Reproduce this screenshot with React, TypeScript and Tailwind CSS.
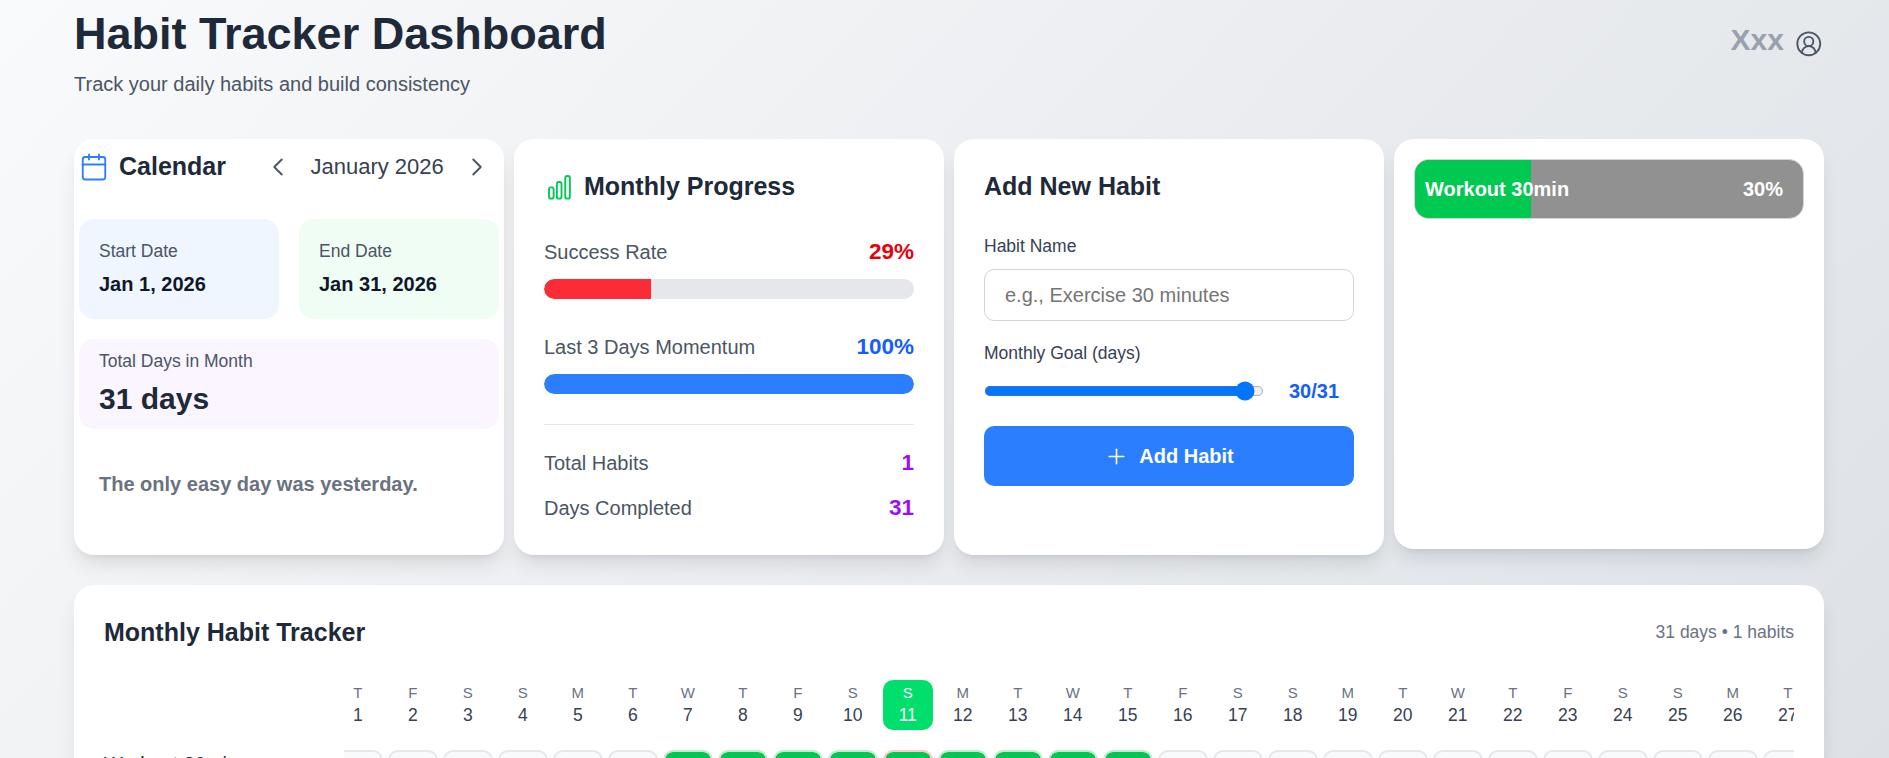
import { Calendar, ChevronLeft, ChevronRight, CircleUserRound, Plus } from 'lucide-react'

const days = Array.from({ length: 31 }, (_, i) => {
  const date = new Date(2026, 0, i + 1)
  return { day: i + 1, letter: 'SMTWTFS'[date.getDay()] }
})

const isDone = (day: number) => day >= 7 && day <= 15

function ProgressRow({ label, value, valueClass }: { label: string; value: string; valueClass: string }) {
  return (
    <div className="flex items-center justify-between">
      <span className="text-gray-600">{label}</span>
      <span className={`text-lg font-bold ${valueClass}`}>{value}</span>
    </div>
  )
}

function BarsIcon() {
  return (
    <svg viewBox="0 0 24 24" fill="none" stroke="currentColor" strokeWidth="1.5" className="h-6 w-6 text-green-500">
      <rect x="4" y="12.3" width="3.7" height="9" rx="1.6" />
      <rect x="10.3" y="8" width="3.7" height="13.3" rx="1.6" />
      <rect x="17" y="3.2" width="3.7" height="18.1" rx="1.6" />
    </svg>
  )
}

export default function App() {
  return (
    <div className="h-screen overflow-hidden font-['Liberation_Sans',Arial,sans-serif]">
      <div className="h-[2000px] bg-gradient-to-br from-gray-50 to-gray-300">
        <div className="w-[1400px] ml-[59.2px] pt-[7.3px] [zoom:1.25]">
          {/* Header */}
          <div className="flex items-start justify-between mb-8">
            <div>
              <h1 className="text-4xl font-bold text-gray-800">Habit Tracker Dashboard</h1>
              <p className="mt-2 text-gray-600">Track your daily habits and build consistency</p>
            </div>
            <div className="flex items-center gap-[9px] pt-[9px] pr-[1px]">
              <span className="text-2xl font-bold text-gray-400">Xxx</span>
              <CircleUserRound className="mt-[5px] h-[22px] w-[22px] text-gray-600" strokeWidth={1.6} />
            </div>
          </div>

          <div className="grid grid-cols-4 gap-2 mb-6">
            {/* Calendar */}
            <div className="bg-white rounded-2xl shadow-lg px-1 pt-2">
              <div className="flex items-center justify-between pr-1.5 mb-7">
                <div className="flex items-center gap-2">
                  <Calendar className="h-6 w-6 text-blue-500" strokeWidth={1.5} />
                  <h2 className="text-xl font-bold text-gray-800">Calendar</h2>
                </div>
                <div className="flex items-center">
                  <ChevronLeft className="h-6 w-6 text-gray-600" strokeWidth={1.5} />
                  <span className="w-[135px] text-center text-[17.6px] leading-7 text-gray-700">January 2026</span>
                  <ChevronRight className="h-6 w-6 text-gray-600" strokeWidth={1.5} />
                </div>
              </div>
              <div className="grid grid-cols-2 gap-4">
                <div className="rounded-xl bg-blue-50 p-4">
                  <p className="text-sm text-gray-600">Start Date</p>
                  <p className="mt-1 font-bold text-gray-900">Jan 1, 2026</p>
                </div>
                <div className="rounded-xl bg-green-50 p-4">
                  <p className="text-sm text-gray-600">End Date</p>
                  <p className="mt-1 font-bold text-gray-900">Jan 31, 2026</p>
                </div>
              </div>
              <div className="mt-4 rounded-xl bg-purple-50 px-4 py-2">
                <p className="text-sm text-gray-600">Total Days in Month</p>
                <p className="mt-1 text-2xl font-bold text-gray-800">31 days</p>
              </div>
              <p className="mt-8 px-4 font-bold text-gray-500">The only easy day was yesterday.</p>
            </div>

            {/* Monthly progress */}
            <div className="bg-white rounded-2xl shadow-lg p-6">
              <div className="flex items-center gap-2 mb-6">
                <BarsIcon />
                <h2 className="text-xl font-bold text-gray-800">Monthly Progress</h2>
              </div>
              <ProgressRow label="Success Rate" value="29%" valueClass="text-red-600" />
              <div className="mt-2 h-4 rounded-full bg-gray-200 overflow-hidden">
                <div className="h-full bg-red-500 rounded-l-full" style={{ width: '29%' }} />
              </div>
              <div className="mt-6">
                <ProgressRow label="Last 3 Days Momentum" value="100%" valueClass="text-blue-600" />
              </div>
              <div className="mt-2 h-4 rounded-full bg-gray-200 overflow-hidden">
                <div className="h-full bg-blue-500 rounded-full" style={{ width: '100%' }} />
              </div>
              <div className="mt-6 border-t border-gray-200 pt-4 space-y-2">
                <ProgressRow label="Total Habits" value="1" valueClass="text-purple-600" />
                <ProgressRow label="Days Completed" value="31" valueClass="text-purple-600" />
              </div>
            </div>

            {/* Add habit */}
            <div className="bg-white rounded-2xl shadow-lg p-6">
              <h2 className="mb-6 text-xl font-bold text-gray-800">Add New Habit</h2>
              <label className="block mb-2 text-sm text-gray-700">Habit Name</label>
              <input
                placeholder="e.g., Exercise 30 minutes"
                className="w-full rounded-lg border border-gray-300 px-4 py-2 text-gray-800 outline-none placeholder:text-[#757575]"
              />
              <label className="block mt-4 mb-2 text-sm text-gray-700">Monthly Goal (days)</label>
              <div className="flex items-center gap-2">
                <input type="range" min={1} max={31} defaultValue={30} className="flex-1 min-w-0" />
                <span className="w-16 text-center font-bold text-blue-600">30/31</span>
              </div>
              <button className="mt-4 flex w-full items-center justify-center gap-2 rounded-lg bg-blue-500 py-3 font-bold text-white">
                <Plus className="h-5 w-5" strokeWidth={1.5} />
                Add Habit
              </button>
            </div>

            {/* Habit list */}
            <div className="bg-white rounded-2xl shadow-lg p-4 self-start h-[328px]">
              <div className="relative h-12 overflow-hidden rounded-xl border border-gray-300 bg-[#919191]">
                <div className="h-full bg-green-500" style={{ width: '30%' }} />
                <div className="absolute inset-0 flex items-center justify-between pl-2 pr-4 font-bold text-white">
                  <span>Workout 30min</span>
                  <span>30%</span>
                </div>
              </div>
            </div>
          </div>

          {/* Tracker */}
          <div className="bg-white rounded-2xl shadow-lg p-6">
            <div className="flex items-center justify-between mb-6">
              <h2 className="text-xl font-bold text-gray-800">Monthly Habit Tracker</h2>
              <span className="text-sm text-gray-500">31 days • 1 habits</span>
            </div>
            <div className="flex">
              <div className="w-48 shrink-0 pt-[55px] text-gray-800">Workout 30min</div>
              <div className="min-w-0 flex-1 overflow-hidden">
                <div className="-ml-[9px] flex gap-1 mb-4">
                  {days.map((d) => (
                    <div
                      key={d.day}
                      className={`w-[40px] shrink-0 rounded-lg py-0.5 text-center ${d.day === 11 ? 'bg-[#00df6c] text-white' : ''}`}
                    >
                      <div className={`text-xs ${d.day === 11 ? 'text-white' : 'text-gray-500'}`}>{d.letter}</div>
                      <div className={`text-sm ${d.day === 11 ? 'text-white' : 'text-gray-700'}`}>{d.day}</div>
                    </div>
                  ))}
                </div>
                <div className="-ml-[9px] flex gap-1">
                  {days.map((d) => (
                    <div
                      key={d.day}
                      className={`h-10 w-[40px] shrink-0 rounded-lg border-2 ${
                        isDone(d.day)
                          ? d.day === 11
                            ? 'border-red-200 bg-green-500 bg-clip-padding'
                            : 'border-[#c4ead2] bg-green-500 bg-clip-padding'
                          : 'border-gray-200 bg-gray-50'
                      }`}
                    />
                  ))}
                </div>
              </div>
            </div>
          </div>
        </div>
      </div>
    </div>
  )
}
